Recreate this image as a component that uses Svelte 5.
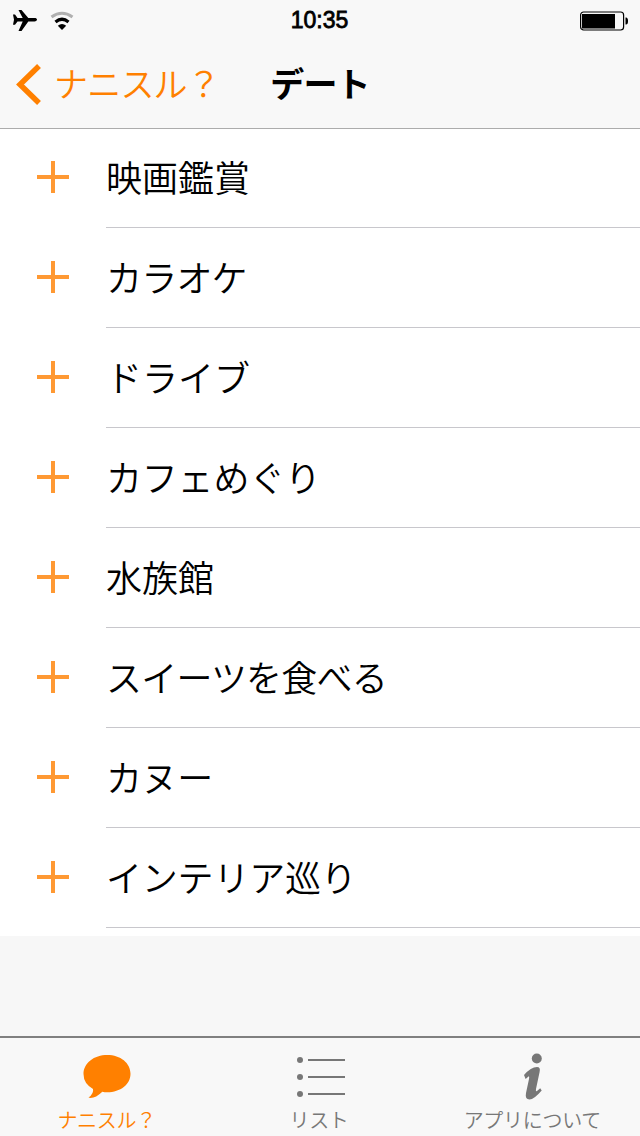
<script lang="ts">
	type TabIcon = 'bubble' | 'list' | 'info';

	interface Item {
		label: string;
		tracking: number;
	}

	interface Tab {
		icon: TabIcon;
		label: string;
	}

	const items: Item[] = [
		{ label: '映画鑑賞', tracking: 0 },
		{ label: 'カラオケ', tracking: -0.8 },
		{ label: 'ドライブ', tracking: 0 },
		{ label: 'カフェめぐり', tracking: -0.2 },
		{ label: '水族館', tracking: 0 },
		{ label: 'スイーツを食べる', tracking: -0.8 },
		{ label: 'カヌー', tracking: -0.4 },
		{ label: 'インテリア巡り', tracking: -0.2 }
	];

	const tabs: Tab[] = [
		{ icon: 'bubble', label: 'ナニスル？' },
		{ icon: 'list', label: 'リスト' },
		{ icon: 'info', label: 'アプリについて' }
	];

	let activeTab = $state<TabIcon>('bubble');
</script>

<div class="screen">
	<header>
		<div class="status">
			<div class="signal">
				<svg width="26" height="24" viewBox="0 0 26 24">
					<path
						d="M1 5.500h2l2.500 3.400h5.200L6.500 1H9.500l6.800 7.900h6.200c1.600 0 2.500.5 2.500 1.700s-.9 1.800-2.500 1.800h-6.200L9.500 22H6.500l4.200-9.600H5.500L3 15.700H1l1-5z"
					/>
				</svg>
				<svg width="24" height="24" viewBox="0 0 24 24">
					<path class="line" d="M1.500 8Q12 .5 22.500 8" stroke="#b0b0b0" stroke-width="3" />
					<path class="line" d="M5.500 13Q12 7.500 18.500 13" stroke="#000" stroke-width="3.200" />
					<path d="M7.800 16.800Q12 13.200 16.200 16.800L12 21z" />
				</svg>
			</div>
			<time>10:35</time>
			<svg class="battery" width="50" height="20" viewBox="0 0 50 20">
				<rect class="line" x="1.600" y="1" width="43" height="18" rx="3" stroke="#000" stroke-width="1.200" />
				<rect x="3" y="3" width="33" height="14.500" />
				<path d="M46.500 6.500h.5q2 0 2 3.500t-2 3.500h-.5z" />
			</svg>
		</div>
		<nav>
			<button class="back">
				<svg width="26" height="42" viewBox="0 0 26 42">
					<path class="line" d="M24 3L5 21.500L24 40" stroke="currentColor" stroke-width="5.500" />
				</svg>
				<span>ナニスル？</span>
			</button>
			<h1>デート</h1>
		</nav>
	</header>

	<ul class="list">
		{#each items as item (item.label)}
			<li>
				<button class="add" aria-label="追加">
					<svg width="32" height="32" viewBox="0 0 32 32">
						<path d="M16 0v32M0 16h32" stroke="currentColor" stroke-width="4" />
					</svg>
				</button>
				<span class="label" style:letter-spacing="{item.tracking}px">{item.label}</span>
			</li>
		{/each}
	</ul>

	<footer>
		{#each tabs as tab (tab.icon)}
			<button class="tab" class:active={activeTab === tab.icon} onclick={() => (activeTab = tab.icon)}>
				<svg width="50" height="50" viewBox="0 0 50 50">
					{#if tab.icon === 'bubble'}
						<path
							d="M25.300 3C38.500 3 48.500 11 48.500 21.800C48.500 32.500 38.500 40.300 25.300 40.300Q22.500 40.300 20.300 39.800Q14 46 8.500 46L6.500 45.600Q12 41.500 11 37Q1.500 31.500 1.500 22C1.500 11 12 3 25.300 3z"
						/>
					{:else if tab.icon === 'list'}
						<circle cx="5" cy="8" r="3" />
						<circle cx="5" cy="25" r="3" />
						<circle cx="5" cy="42" r="3" />
						<path d="M13 8h37M13 25h37M13 42h37" stroke="currentColor" stroke-width="2" />
					{:else}
						<circle cx="28.800" cy="6.500" r="5" />
						<path
							d="M16 23Q23 15 29 15Q32.800 15 31.600 20L28 37Q27.500 40 29 39L32.200 36.200L33.700 38.500Q26 47.500 21.500 47.500Q16.800 47.500 18 41L21 27Q21.600 23.800 20.500 24.500L17.600 27z"
						/>
					{/if}
				</svg>
				<span>{tab.label}</span>
			</button>
		{/each}
	</footer>
</div>

<style>
	:global(body) {
		margin: 0;
	}

	.screen {
		display: flex;
		flex-direction: column;
		width: 640px;
		height: 1136px;
		overflow: hidden;
		background: #f7f7f7;
		color: #000;
		font-family: 'Noto Sans CJK JP', sans-serif;
		font-weight: 350;
	}

	button {
		margin: 0;
		padding: 0;
		border: none;
		background: none;
		color: inherit;
		font: inherit;
		cursor: pointer;
	}

	svg {
		display: block;
		flex-shrink: 0;
		fill: currentColor;
	}

	.line {
		fill: none;
	}

	header {
		box-sizing: border-box;
		height: 129px;
		border-bottom: 1px solid #acacac;
		background: #f8f8f8;
	}

	.status {
		display: grid;
		grid-template-columns: 1fr auto 1fr;
		align-items: center;
		height: 40px;
		padding: 0 11px 0 12px;
	}

	.signal {
		display: flex;
		gap: 12px;
	}

	time {
		padding-right: 2px;
		font-family: 'Liberation Sans', sans-serif;
		font-size: 23px;
		font-weight: 400;
		line-height: 41px;
		-webkit-text-stroke: 0.8px #000;
	}

	.battery {
		justify-self: end;
	}

	nav {
		display: grid;
		grid-template-columns: 1fr auto 1fr;
		align-items: center;
		height: 88px;
	}

	.back {
		display: flex;
		align-items: center;
		gap: 13px;
		padding-left: 15px;
		color: #ff8000;
		font-size: 34px;
		line-height: 84px;
		letter-spacing: -0.8px;
	}

	.back span,
	h1 {
		padding-bottom: 3px;
	}

	h1 {
		margin: 0;
		font-size: 34px;
		font-weight: 700;
		line-height: 84px;
		letter-spacing: -0.8px;
	}

	.list {
		height: 807px;
		margin: 0;
		padding: 0;
		background: #fff;
		list-style: none;
	}

	li {
		display: flex;
		height: 100px;
		margin-top: -1px;
		margin-bottom: 1px;
	}

	.add {
		display: flex;
		align-items: center;
		justify-content: center;
		width: 106px;
		padding-bottom: 2px;
		color: #ff9933;
	}

	.label {
		box-sizing: border-box;
		flex: 1;
		border-bottom: 1px solid #c8c7cc;
		font-size: 36px;
		line-height: 96px;
		white-space: nowrap;
	}

	footer {
		display: grid;
		grid-template-columns: repeat(3, 1fr);
		box-sizing: border-box;
		height: 100px;
		margin-top: auto;
		border-top: 2px solid #808080;
		background: #f8f8f8;
	}

	.tab {
		display: flex;
		flex-direction: column;
		align-items: center;
		padding-top: 14px;
		color: #777;
		font-size: 20px;
		line-height: 36px;
		letter-spacing: -0.3px;
	}

	.tab span {
		padding-right: 2px;
	}

	.tab.active {
		color: #ff8000;
	}

	.tab.active span {
		padding-right: 0;
	}
</style>
